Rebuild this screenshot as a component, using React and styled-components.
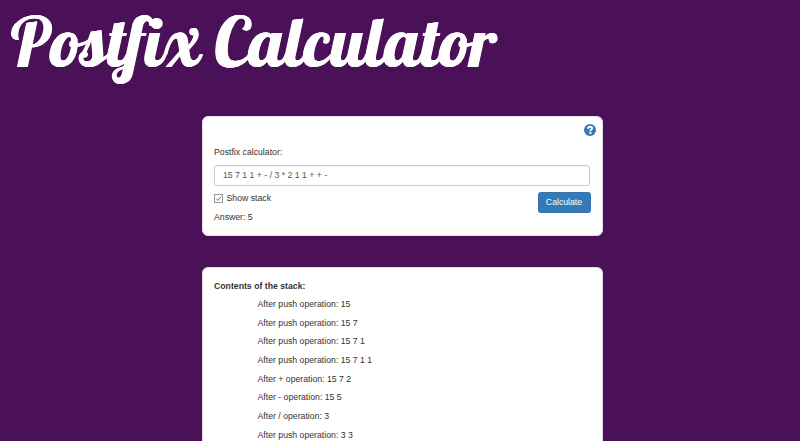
import React from "react";
import styled, { createGlobalStyle } from "styled-components";

const GlobalStyle = createGlobalStyle`
  * { box-sizing: border-box; }
  html, body { margin: 0; height: 100%; overflow: hidden; }
  body {
    background: #4b1158;
    color: #333;
    font-family: "Liberation Sans", Arial, sans-serif;
    font-size: 8.71px;
    line-height: 12.44px;
  }
`;

const Page = styled.main`
  height: 441px;
  overflow: hidden;
`;

const Title = styled.h1`
  height: 116px;
  margin: 0;
  padding: 0 0 0 10.5px;
  color: #fff;
  font-family: Lobster, "Liberation Serif", serif;
  font-size: 68.5px;
  font-weight: 400;
  letter-spacing: 0.45px;
  word-spacing: -1px;
  line-height: 83px;
  text-shadow: 0.5px 0 0 #fff, 1px 0 0 #fff;
  white-space: nowrap;
`;

const Panel = styled.section`
  width: 401px;
  height: ${(p) => p.$height}px;
  margin: 0 0 30.5px 202px;
  padding: ${(p) => p.$top}px 11px 0;
  background: #fff;
  border: 1px solid #e4dde6;
  border-radius: 6px;
`;

const HelpRow = styled.div`
  display: flex;
  justify-content: flex-end;
  height: 23px;
  margin-right: -5px;
  padding-top: 0.5px;
`;

const Label = styled.label`
  display: block;
  height: 18.5px;
`;

const Input = styled.input`
  display: block;
  width: 376.4px;
  height: 21px;
  padding: 0 8px;
  border: 1px solid #ccc;
  border-radius: 3px;
  box-shadow: inset 0 1px 1px rgba(0, 0, 0, 0.06);
  color: #555;
  font: inherit;
  outline: none;
`;

const Controls = styled.div`
  display: flex;
  justify-content: space-between;
  align-items: flex-start;
  width: 376.5px;
  padding-top: 6px;
`;

const CheckLabel = styled.label`
  display: flex;
  align-items: center;
  gap: 3.5px;
  height: 13px;
`;

const CheckBox = styled.svg`
  width: 9px;
  height: 9px;
`;

const Answer = styled.p`
  margin: 6px 0 0;
`;

const Button = styled.button`
  width: 53px;
  height: 21px;
  padding: 0;
  border: 1px solid #3374ad;
  border-radius: 2.5px;
  background: #337ab7;
  color: #fff;
  font: inherit;
`;

const Heading = styled.h2`
  margin: 0 0 6.22px;
  font-size: inherit;
  font-weight: 700;
`;

const Steps = styled.div`
  padding-left: 43.5px;
`;

const Step = styled.p`
  margin: 0 0 6.22px;
`;

const steps = [
  "After push operation: 15",
  "After push operation: 15 7",
  "After push operation: 15 7 1",
  "After push operation: 15 7 1 1",
  "After + operation: 15 7 2",
  "After - operation: 15 5",
  "After / operation: 3",
  "After push operation: 3 3",
];

export default function App() {
  return (
    <Page>
      <GlobalStyle />
      <Title>Postfix Calculator</Title>
      <Panel $height={120} $top={6}>
        <HelpRow>
          <svg width="12" height="12" viewBox="0 0 12 12" aria-label="Help">
            <circle cx="6" cy="6" r="6" fill="#337ab7" />
            <path
              d="M4 4.7C4 3.200 4.800 2.700 6 2.700s2.100.6 2.100 1.600C8.100 5.600 6.400 5.500 6.400 7.200"
              fill="none"
              stroke="#fff"
              strokeWidth="1.9"
            />
            <path d="M5.400 8h2v1.800h-2z" fill="#fff" />
          </svg>
        </HelpRow>
        <Label htmlFor="expression">Postfix calculator:</Label>
        <Input id="expression" defaultValue="15 7 1 1 + - / 3 * 2 1 1 + + -" />
        <Controls>
          <div>
            <CheckLabel>
              <CheckBox viewBox="0 0 9 9">
                <rect x="0.5" y="0.5" width="8" height="8" fill="#fff" stroke="#999" />
                <path d="M2 4.600l1.800 1.800L7.200 2.700" fill="none" stroke="#555" strokeWidth="0.8" />
              </CheckBox>
              Show stack
            </CheckLabel>
            <Answer>Answer: 5</Answer>
          </div>
          <Button>Calculate</Button>
        </Controls>
      </Panel>
      <Panel $height={260} $top={12}>
        <Heading>Contents of the stack:</Heading>
        <Steps>
          {steps.map((s) => (
            <Step key={s}>{s}</Step>
          ))}
        </Steps>
      </Panel>
    </Page>
  );
}
